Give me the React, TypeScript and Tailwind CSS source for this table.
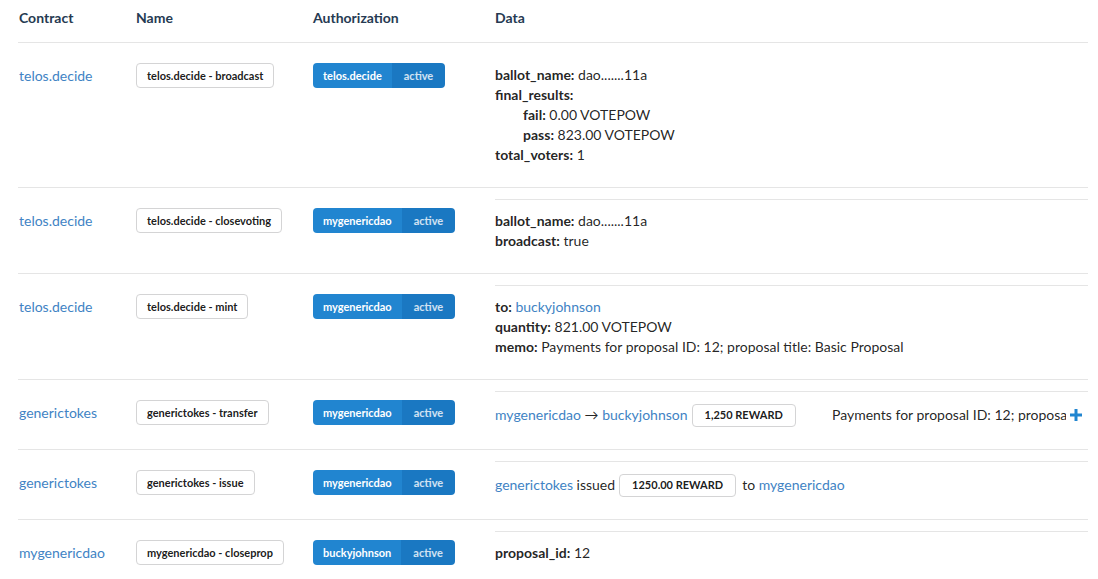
import type { ReactNode } from "react";

const link = "text-[#4183c4]";

const NameTag = ({ children }: { children: ReactNode }) => (
  <span className="inline-flex h-[25px] items-center rounded-[4px] border border-[#d4d4d5] bg-white px-[10px] text-[11px] font-bold text-black/90">
    {children}
  </span>
);

const AuthTag = ({ actor }: { actor: string }) => (
  <span className="inline-flex h-[25px] items-stretch overflow-hidden rounded-[4px] text-[11px] font-bold">
    <span className="flex items-center bg-[#2185d0] px-[10px] text-white">{actor}</span>
    <span className="flex items-center bg-[#1a78c2] px-[12px] text-white/80">active</span>
  </span>
);

const Amount = ({ children }: { children: ReactNode }) => (
  <span className="inline-flex h-[23px] items-center rounded-[4px] border border-[#d4d4d5] bg-white px-3 text-[11px] font-bold text-black/90">
    {children}
  </span>
);

const Field = ({ k, children, indent }: { k: string; children?: ReactNode; indent?: boolean }) => (
  <div className={indent ? "pl-7" : ""}>
    <b className="font-bold">{k}:</b> {children}
  </div>
);

const PlusIcon = () => (
  <svg width="12" height="12" viewBox="0 0 12 12" className="shrink-0">
    <rect x="4.5" y="0" width="3" height="12" fill="#2185d0" />
    <rect x="0" y="4.5" width="12" height="3" fill="#2185d0" />
  </svg>
);

const rows: { contract: string; name: string; actor: string; data: ReactNode }[] = [
  {
    contract: "telos.decide",
    name: "telos.decide - broadcast",
    actor: "telos.decide",
    data: (
      <>
        <Field k="ballot_name">dao.......11a</Field>
        <Field k="final_results" />
        <Field k="fail" indent>0.00 VOTEPOW</Field>
        <Field k="pass" indent>823.00 VOTEPOW</Field>
        <Field k="total_voters">1</Field>
      </>
    ),
  },
  {
    contract: "telos.decide",
    name: "telos.decide - closevoting",
    actor: "mygenericdao",
    data: (
      <>
        <Field k="ballot_name">dao.......11a</Field>
        <Field k="broadcast">true</Field>
      </>
    ),
  },
  {
    contract: "telos.decide",
    name: "telos.decide - mint",
    actor: "mygenericdao",
    data: (
      <>
        <Field k="to">
          <span className={link}>buckyjohnson</span>
        </Field>
        <Field k="quantity">821.00 VOTEPOW</Field>
        <Field k="memo">Payments for proposal ID: 12; proposal title: Basic Proposal</Field>
      </>
    ),
  },
  {
    contract: "generictokes",
    name: "generictokes - transfer",
    actor: "mygenericdao",
    data: (
      <div className="flex min-h-6 items-center justify-between">
        <div className="flex items-center gap-1">
          <span>
            <span className={link}>mygenericdao</span> → <span className={link}>buckyjohnson</span>
          </span>
          <Amount>1,250 REWARD</Amount>
        </div>
        <div className="flex items-center gap-1 pr-[6px]">
          <span className="w-[234px] overflow-hidden whitespace-nowrap">
            Payments for proposal ID: 12; proposal title: Basic Proposal
          </span>
          <PlusIcon />
        </div>
      </div>
    ),
  },
  {
    contract: "generictokes",
    name: "generictokes - issue",
    actor: "mygenericdao",
    data: (
      <div className="flex min-h-6 items-center gap-1">
        <span>
          <span className={link}>generictokes</span> issued
        </span>
        <Amount>1250.00 REWARD</Amount>
        <span className="ml-[2px]">
          to <span className={link}>mygenericdao</span>
        </span>
      </div>
    ),
  },
  {
    contract: "mygenericdao",
    name: "mygenericdao - closeprop",
    actor: "buckyjohnson",
    data: <Field k="proposal_id">12</Field>,
  },
];

const cols = "grid grid-cols-[118px_177px_182px_1fr]";

export default function App() {
  return (
    <div className="min-h-screen bg-white pl-[18px] pr-[10px] text-[14px] leading-5 text-black/87 font-['Lato','Liberation_Sans',sans-serif]">
      <div className={`${cols} border-b border-[#e5e5e5] pb-[14px] pt-2 font-bold text-[#263a52]`}>
        <div className="pl-px">Contract</div>
        <div>Name</div>
        <div>Authorization</div>
        <div>Data</div>
      </div>
      {rows.map((r, i) => (
        <div key={r.name} className={`${cols} border-b border-[#e5e5e5] pb-[22px]`}>
          <div className="pl-px pt-5">
            <div className={`${link} leading-[25px]`}>{r.contract}</div>
          </div>
          <div className="pt-5">
            <NameTag>{r.name}</NameTag>
          </div>
          <div className="pt-5">
            <AuthTag actor={r.actor} />
          </div>
          {i === 0 ? (
            <div className="pt-[22px]">{r.data}</div>
          ) : (
            <div className="pt-[11px]">
              <div className="border-t border-[#e5e5e5] pt-[11px]">{r.data}</div>
            </div>
          )}
        </div>
      ))}
    </div>
  );
}
